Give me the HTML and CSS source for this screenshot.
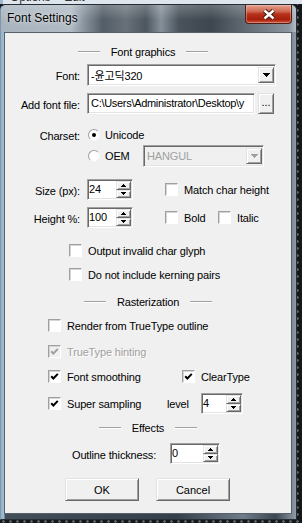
FILE: index.html
```html
<!DOCTYPE html>
<html lang="en">
<head>
  <meta charset="UTF-8" />
  <meta name="viewport" content="width=device-width, initial-scale=1.0" />
  <title>Font Settings</title>
  <link rel="stylesheet" href="styles.css">
</head>
<body>

  <div class="behind">
    <div class="behind-menu"><span>Options</span><span>Edit</span></div>
  </div>

  <div class="window">
    <div class="titlebar">
      <span class="title">Font Settings</span>
      <button class="close" aria-label="Close">
        <svg width="14" height="11" viewBox="0 0 14 11">
          <path d="M2.5 1.5l9 8M11.5 1.5l-9 8" stroke="#4a1a12" stroke-width="4.6" fill="none"/>
          <path d="M2.5 1.5l9 8M11.5 1.5l-9 8" stroke="#fff" stroke-width="2.4" fill="none"/>
        </svg>
      </button>
    </div>

    <div class="frame">
      <div class="client">

        <div class="group r-head-font group-shift">
          <span class="rule"></span><span>Font graphics</span><span class="rule"></span>
        </div>

        <div class="row r-font">
          <label class="lbl">Font:</label>
          <div class="combo sunken font-combo">
            <span class="combo-text">-윤고딕320</span>
            <span class="drop raised">
              <svg width="7" height="4"><path d="M0 0h7v1h-1v1h-1v1h-1v1h-1v-1h-1v-1h-1v-1h-1z"/></svg>
            </span>
          </div>
        </div>

        <div class="row r-file">
          <label class="lbl">Add font file:</label>
          <div class="edit sunken file-edit"><span class="edit-text">C:\Users\Administrator\Desktop\y</span></div>
          <button class="raised browse">...</button>
        </div>

        <div class="row r-charset">
          <span class="lbl">Charset:</span>
          <span class="radio-opt"><span class="radio on"></span>Unicode</span>
        </div>

        <div class="row r-oem">
          <span class="lbl"></span>
          <span class="radio-opt oem-opt"><span class="radio"></span>OEM</span>
          <div class="combo sunken oem-combo disabled">
            <span class="combo-text">HANGUL</span>
            <span class="drop raised">
              <svg width="7" height="4"><path d="M0 0h7v1h-1v1h-1v1h-1v1h-1v-1h-1v-1h-1v-1h-1z"/></svg>
            </span>
          </div>
        </div>

        <div class="row r-size">
          <label class="lbl">Size (px):</label>
          <div class="spin sunken size-spin">
            <span class="spin-text">24</span>
            <span class="spin-btns">
              <span class="raised"><svg width="5" height="3"><path d="M2 0h1v1h1v1h1v1h-5v-1h1v-1h1z"/></svg></span>
              <span class="raised"><svg width="5" height="3"><path d="M0 0h5v1h-1v1h-1v1h-1v-1h-1v-1h-1z"/></svg></span>
            </span>
          </div>
          <span class="chk chk-after-spin"><span class="box"></span>Match char height</span>
        </div>

        <div class="row r-height">
          <label class="lbl">Height %:</label>
          <div class="spin sunken size-spin">
            <span class="spin-text">100</span>
            <span class="spin-btns">
              <span class="raised"><svg width="5" height="3"><path d="M2 0h1v1h1v1h1v1h-5v-1h1v-1h1z"/></svg></span>
              <span class="raised"><svg width="5" height="3"><path d="M0 0h5v1h-1v1h-1v1h-1v-1h-1v-1h-1z"/></svg></span>
            </span>
          </div>
          <span class="chk chk-after-spin chk-bold"><span class="box"></span>Bold</span>
          <span class="chk"><span class="box"></span>Italic</span>
        </div>

        <div class="row r-output indent-2">
          <span class="chk"><span class="box"></span>Output invalid char glyph</span>
        </div>

        <div class="row r-kerning indent-2">
          <span class="chk"><span class="box"></span>Do not include kerning pairs</span>
        </div>

        <div class="group r-head-raster">
          <span class="rule"></span><span>Rasterization</span><span class="rule"></span>
        </div>

        <div class="row r-render indent-1">
          <span class="chk"><span class="box"></span>Render from TrueType outline</span>
        </div>

        <div class="row r-hinting indent-1">
          <span class="chk disabled"><span class="box checked">
            <svg width="9" height="9" viewBox="0 0 9 9"><path d="M1.2 4.2l2.2 2.3 4.4-4.6" stroke="#a0a0a0" stroke-width="2" fill="none"/></svg>
          </span>TrueType hinting</span>
        </div>

        <div class="row r-smooth indent-1">
          <span class="chk chk-smooth"><span class="box checked">
            <svg width="9" height="9" viewBox="0 0 9 9"><path d="M1.2 4.2l2.2 2.3 4.4-4.6" stroke="#000" stroke-width="2" fill="none"/></svg>
          </span>Font smoothing</span>
          <span class="chk"><span class="box checked">
            <svg width="9" height="9" viewBox="0 0 9 9"><path d="M1.2 4.2l2.2 2.3 4.4-4.6" stroke="#000" stroke-width="2" fill="none"/></svg>
          </span>ClearType</span>
        </div>

        <div class="row r-super indent-1">
          <span class="chk chk-super"><span class="box checked">
            <svg width="9" height="9" viewBox="0 0 9 9"><path d="M1.2 4.2l2.2 2.3 4.4-4.6" stroke="#000" stroke-width="2" fill="none"/></svg>
          </span>Super sampling</span>
          <span class="level">level</span>
          <div class="spin sunken level-spin">
            <span class="spin-text">4</span>
            <span class="spin-btns">
              <span class="raised"><svg width="5" height="3"><path d="M2 0h1v1h1v1h1v1h-5v-1h1v-1h1z"/></svg></span>
              <span class="raised"><svg width="5" height="3"><path d="M0 0h5v1h-1v1h-1v1h-1v-1h-1v-1h-1z"/></svg></span>
            </span>
          </div>
        </div>

        <div class="group r-head-effects">
          <span class="rule"></span><span>Effects</span><span class="rule"></span>
        </div>

        <div class="row r-outline">
          <label class="outline-lbl">Outline thickness:</label>
          <div class="spin sunken outline-spin">
            <span class="spin-text">0</span>
            <span class="spin-btns">
              <span class="raised"><svg width="5" height="3"><path d="M2 0h1v1h1v1h1v1h-5v-1h1v-1h1z"/></svg></span>
              <span class="raised"><svg width="5" height="3"><path d="M0 0h5v1h-1v1h-1v1h-1v-1h-1v-1h-1z"/></svg></span>
            </span>
          </div>
        </div>

        <div class="row r-buttons">
          <button class="raised push">OK</button>
          <button class="raised push">Cancel</button>
        </div>

      </div>
    </div>
  </div>

</body>
</html>
```

FILE: styles.css
```css
* {
  box-sizing: border-box;
}
body {
  margin: 0;
  width: 302px;
  height: 523px;
  overflow: hidden;
  font-family: "Liberation Sans", "Noto Sans CJK KR", Arial, sans-serif;
  font-size: 11px;
  letter-spacing: -0.15px;
  color: #000;
  background: radial-gradient(circle, #5c5f62 1px, transparent 1.6px) 0 0 / 7px 7px, #15181b;
}

/* the program window behind the dialog */
.behind {
  height: 4px;
  overflow: hidden;
  background: #dfe5ec;
  border-left: 3px solid #9fbad0;
}
.behind-menu {
  display: flex;
  gap: 14px;
  padding-left: 7px;
  margin-top: -9px;
  font-size: 12px;
  line-height: 12px;
  color: #333;
}

/* dialog frame */
.window {
  width: 297px;
  height: 516px;
  display: flex;
  flex-direction: column;
  border: 1px solid #262d35;
  border-left-color: #7d98ae;
  border-radius: 6px 6px 0 0;
  background: linear-gradient(90deg, #93b2ca 0, #a2bcd0 3px, #434e59 4px, #36404a 60%, #6f7c89 82%, #3c4651 93%, #8e9aa6 100%);
}
.titlebar {
  height: 27px;
  display: flex;
  align-items: flex-start;
  padding-left: 6px;
  border-radius: 5px 5px 0 0;
  background:
    linear-gradient(180deg, rgba(255,255,255,0.22), rgba(255,255,255,0) 55%),
    linear-gradient(90deg, #a7b3be 0, #b0bac4 70px, #7a8590 88px, #535d67 102px, #68717a 125px, #4d565f 145px, #85909a 160px, #4a535c 178px, #3d464f 210px, #555e67 232px, #8b959f 288px, #b3bdc7 100%);
}
.title {
  margin-top: 6px;
  font-size: 12px;
  line-height: 14px;
  letter-spacing: 0;
  text-shadow: 0 0 6px rgba(255,255,255,0.75), 0 0 2px rgba(255,255,255,0.6);
}
.close {
  margin-left: auto;
  margin-right: 4px;
  width: 47px;
  height: 19px;
  padding: 0;
  display: flex;
  align-items: center;
  justify-content: center;
  border: 1px solid #4e1f18;
  border-top: none;
  border-radius: 0 0 4px 4px;
  background: linear-gradient(180deg, #e3a08e 0, #cf6a52 35%, #b8321b 50%, #a51f0b 80%, #d2553a 100%);
  box-shadow: inset 0 0 0 1px rgba(255,220,210,0.35);
}
.frame {
  flex: 1;
  display: flex;
  padding: 0 4px 5px 3px;
}
.client {
  flex: 1;
  display: flex;
  flex-direction: column;
  border: 1px solid #56616c;
  background: #f0f0f0;
}

/* 3d edges */
.sunken {
  background: #fff;
  border: 1px solid;
  border-color: #a0a0a0 #fff #fff #a0a0a0;
  box-shadow: inset 1px 1px 0 #696969, inset -1px -1px 0 #e3e3e3;
}
.raised {
  background: #f0f0f0;
  border: 1px solid;
  border-color: #e3e3e3 #696969 #696969 #e3e3e3;
  box-shadow: inset 1px 1px 0 #fff, inset -1px -1px 0 #a0a0a0;
}

/* rows */
.row {
  display: flex;
  align-items: center;
  flex-shrink: 0;
}
.group {
  display: flex;
  align-items: center;
  justify-content: center;
  gap: 11px;
  height: 16px;
  flex-shrink: 0;
}
.group-shift {
  padding-right: 10px;
}
.rule {
  width: 22px;
  border-top: 1px solid #a0a0a0;
  border-bottom: 1px solid #fff;
}
.indent-1 {
  padding-left: 43px;
}
.indent-2 {
  padding-left: 64px;
}

.r-head-font { margin-top: 11px; }
.r-font { margin-top: 4px; height: 22px; }
.r-file { margin-top: 7px; height: 21px; }
.r-charset { margin-top: 13px; height: 15px; }
.r-oem { margin-top: 3px; height: 22px; }
.r-size { margin-top: 12px; height: 21px; }
.r-height { margin-top: 7px; height: 21px; }
.r-output { margin-top: 16px; height: 13px; }
.r-kerning { margin-top: 11px; height: 13px; }
.r-head-raster { margin-top: 13px; }
.r-render { margin-top: 9px; height: 13px; }
.r-hinting { margin-top: 13px; height: 13px; }
.r-smooth { margin-top: 12px; height: 13px; }
.r-super { margin-top: 10px; height: 21px; }
.r-head-effects { margin-top: 6px; }
.r-outline { margin-top: 7px; height: 21px; padding-left: 67px; }
.r-buttons { margin-top: 14px; height: 23px; padding-left: 60px; gap: 17px; }

.lbl {
  width: 75px;
  margin-right: 7px;
  padding-top: 2px;
  text-align: right;
}

/* combo boxes and edits */
.combo {
  display: flex;
  align-items: center;
  height: 22px;
  padding: 1px;
}
.combo-text {
  flex: 1;
  padding-left: 2px;
  white-space: nowrap;
  overflow: hidden;
}
.drop {
  width: 16px;
  height: 16px;
  display: flex;
  align-items: center;
  justify-content: center;
}
.font-combo {
  width: 189px;
}
.oem-combo {
  width: 121px;
}
.disabled.combo {
  background: #f0f0f0;
  color: #a0a0a0;
}
.disabled .drop svg {
  fill: #a0a0a0;
}
.edit {
  height: 21px;
  padding: 3px 0 0 3px;
  overflow: hidden;
}
.edit-text {
  display: block;
  white-space: nowrap;
  letter-spacing: -0.3px;
}
.file-edit {
  width: 168px;
}
.browse {
  width: 16px;
  height: 21px;
  margin-left: 3px;
  padding: 0 0 3px;
  font-family: inherit;
  font-size: 11px;
  color: #000;
}

/* radios and checkboxes */
.radio-opt {
  display: flex;
  align-items: center;
  gap: 5px;
  margin-left: 1px;
}
.oem-opt {
  width: 55px;
}
.radio {
  width: 12px;
  height: 12px;
  border-radius: 50%;
  background: #fff;
  border: 1px solid;
  border-color: #a0a0a0 #f4f4f4 #f4f4f4 #a0a0a0;
  display: flex;
  align-items: center;
  justify-content: center;
}
.radio.on::after {
  content: "";
  width: 4px;
  height: 4px;
  border-radius: 50%;
  background: #000;
}
.chk {
  display: flex;
  align-items: center;
  gap: 6px;
  white-space: nowrap;
}
.box {
  width: 13px;
  height: 13px;
  flex-shrink: 0;
  display: flex;
  align-items: center;
  justify-content: center;
  background: #fff;
  border: 1px solid;
  border-color: #a0a0a0 #fff #fff #a0a0a0;
  box-shadow: inset 1px 1px 0 #d4d4d4;
}
.chk.disabled {
  color: #a0a0a0;
  text-shadow: 1px 1px 0 #fff;
}
.chk.disabled .box {
  background: #f0f0f0;
}
.chk-after-spin {
  margin-left: 32px;
}
.chk-bold {
  width: 53px;
}
.chk-smooth {
  width: 134px;
}
.chk-super {
  width: 119px;
}
.level {
  width: 34px;
}

/* spin controls */
.spin {
  display: flex;
  height: 21px;
  padding: 0 1px 0 0;
}
.spin-text {
  flex: 1;
  padding: 3px 0 0 1px;
}
.spin-btns {
  width: 15px;
  display: flex;
  flex-direction: column;
  padding: 1px 0;
}
.spin-btns .raised {
  flex: 1;
  display: flex;
  align-items: center;
  justify-content: center;
}
.size-spin {
  width: 46px;
}
.level-spin {
  width: 42px;
}
.outline-spin {
  width: 50px;
}
.outline-lbl {
  width: 98px;
  padding-top: 2px;
}

/* push buttons */
.push {
  width: 74px;
  height: 23px;
  padding: 0;
  font-family: inherit;
  font-size: 11px;
  color: #000;
}
```
